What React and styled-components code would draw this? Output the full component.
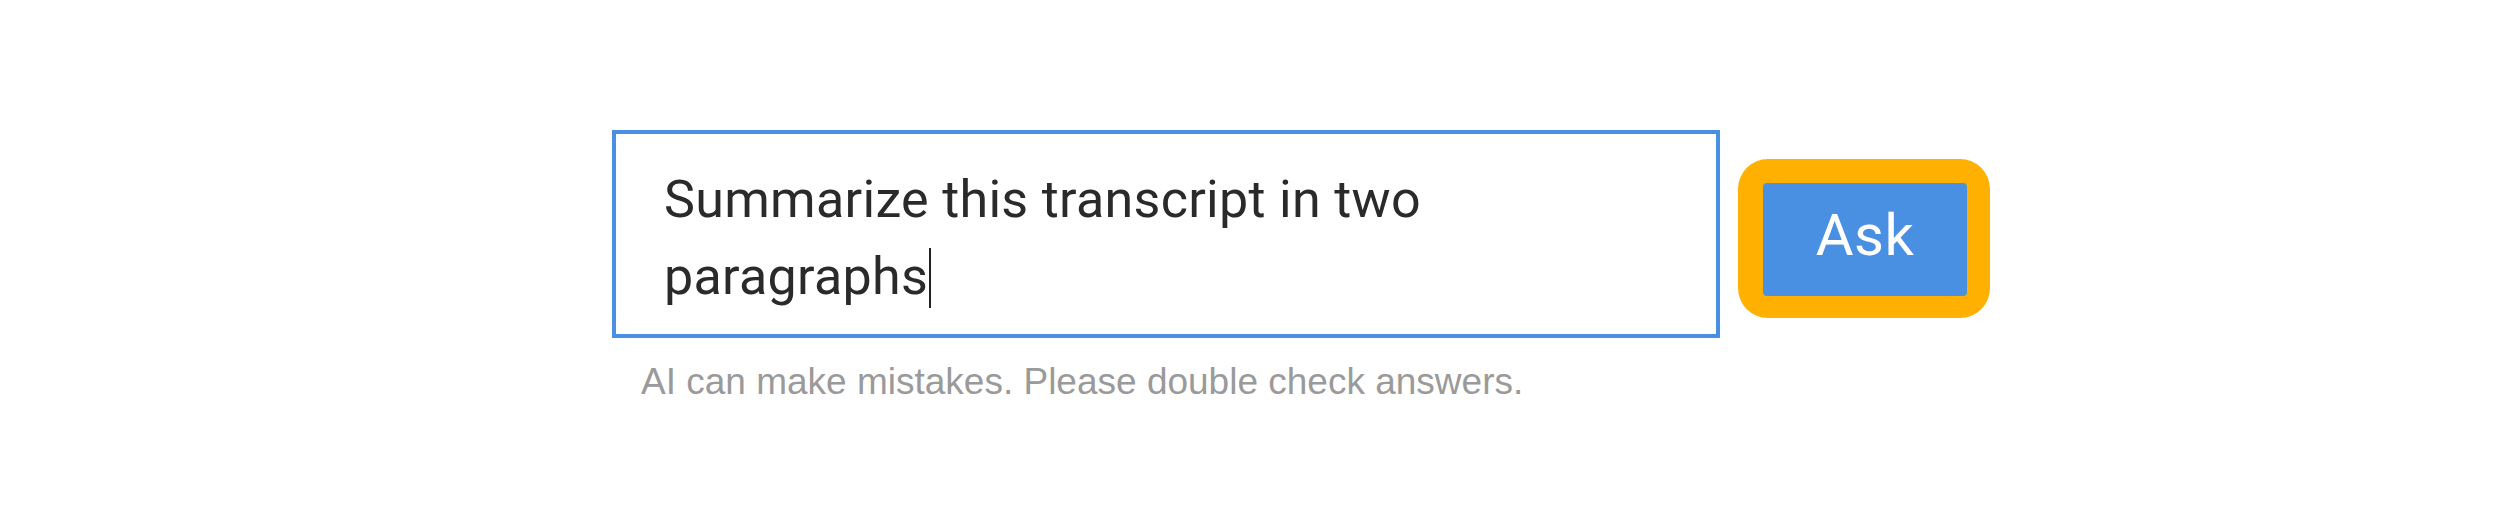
import React from "react";
import styled, { createGlobalStyle } from "styled-components";

const GlobalStyle = createGlobalStyle`
  html, body { margin: 0; padding: 0; background: #ffffff; }
  body { font-family: Roboto, "Liberation Sans", Arial, sans-serif; }
`;

const Page = styled.div`
  width: 2500px;
  height: 507px;
  box-sizing: border-box;
  padding: 130px 0 0 612px;
  background: #ffffff;
`;

const Form = styled.div`
  display: flex;
  flex-direction: column;
  align-items: flex-start;
`;

const Row = styled.div`
  display: flex;
  align-items: flex-start;
  gap: 18px;
`;

const Prompt = styled.div`
  box-sizing: border-box;
  width: 1108px;
  height: 208px;
  border: 4px solid #4a90e2;
  padding: 27px 56px 0 48px;
  font-family: Roboto, "Liberation Sans", Arial, sans-serif;
  font-size: 52px;
  line-height: 77px;
  letter-spacing: 0.3px;
  color: #2a2a2a;
  background: #ffffff;
`;

const Caret = styled.span`
  display: inline-block;
  width: 2px;
  height: 60px;
  margin-left: 1px;
  background: #222222;
  vertical-align: -14px;
`;

const FocusRing = styled.div`
  margin-top: 29px;
  padding: 24px 23px 22px 25px;
  border-radius: 30px;
  background: #ffb000;
  display: flex;
`;

const AskButton = styled.button`
  width: 204px;
  height: 113px;
  border: none;
  border-radius: 4px;
  background: #4a90e2;
  color: #ffffff;
  font-family: Roboto, "Liberation Sans", Arial, sans-serif;
  font-size: 58px;
  letter-spacing: 0.5px;
  padding: 0 0 10px 0;
  cursor: pointer;
`;

const Hint = styled.p`
  margin: 23px 0 0 29px;
  font-family: "Liberation Sans", Arial, sans-serif;
  font-size: 37px;
  line-height: 1.15;
  color: #9a9a9a;
`;

export default function App() {
  return (
    <>
      <GlobalStyle />
      <Page>
        <Form>
          <Row>
            <Prompt>
              Summarize this transcript in two paragraphs
              <Caret />
            </Prompt>
            <FocusRing>
              <AskButton type="button">Ask</AskButton>
            </FocusRing>
          </Row>
          <Hint>AI can make mistakes. Please double check answers.</Hint>
        </Form>
      </Page>
    </>
  );
}
